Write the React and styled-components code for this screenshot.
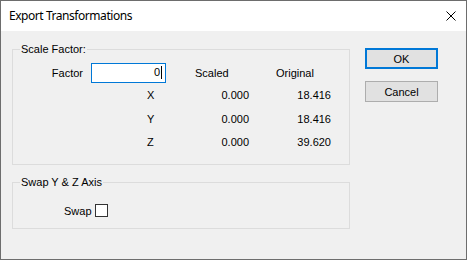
import React from 'react'
import styled, { createGlobalStyle } from 'styled-components'

const Global = createGlobalStyle`
  html, body { margin: 0; padding: 0; background: #ffffff; }
  * { box-sizing: border-box; }
`

const rows = [
  ['X', '0.000', '18.416'],
  ['Y', '0.000', '18.416'],
  ['Z', '0.000', '39.620'],
]

const App = () => {
  return (
    <>
      <Global />
      <Window>
        <TitleBar>
          <Title>Export Transformations</Title>
          <CloseIcon viewBox="0 0 10 10">
            <path d="M0.5 0.5 L9.5 9.5 M9.5 0.5 L0.5 9.5" stroke="#000" strokeWidth="1" />
          </CloseIcon>
        </TitleBar>
        <Body>
          <LeftCol>
            <Group>
              <Legend>Scale Factor:</Legend>
              <ScaleGrid>
                <Label>Factor</Label>
                <FactorInput>
                  <span>0</span>
                  <Caret />
                </FactorInput>
                <Head>Scaled</Head>
                <Head>Original</Head>
                {rows.map(r => (
                  <React.Fragment key={r[0]}>
                    <span />
                    <Axis>{r[0]}</Axis>
                    <Value pad={27}>{r[1]}</Value>
                    <Value pad={0}>{r[2]}</Value>
                  </React.Fragment>
                ))}
              </ScaleGrid>
            </Group>
            <Group second>
              <Legend>Swap Y &amp; Z Axis</Legend>
              <SwapRow>
                <span>Swap</span>
                <Check />
              </SwapRow>
            </Group>
          </LeftCol>
          <Buttons>
            <Button primary>OK</Button>
            <Button>Cancel</Button>
          </Buttons>
        </Body>
      </Window>
    </>
  )
}

export default App

const Window = styled.div`
  width: 467px;
  height: 260px;
  border: 1px solid #6d6d6d;
  display: flex;
  flex-direction: column;
  font-family: "Liberation Sans", Arial, sans-serif;
  font-size: 11px;
  color: #000;
`
const TitleBar = styled.div`
  height: 30px;
  background: #ffffff;
  display: flex;
  align-items: center;
  justify-content: space-between;
  padding: 0 10px 0 8px;
`
const Title = styled.div`
  font-family: "Noto Sans", "Open Sans", sans-serif;
  font-size: 12px;
  letter-spacing: -0.45px;
  color: #000;
  margin-top: -1px;
`
const CloseIcon = styled.svg`
  width: 10px;
  height: 10px;
  margin-top: -1px;
`
const Body = styled.div`
  flex: 1;
  background: #f0f0f0;
  display: flex;
  padding: 12px 0 0 11px;
`
const LeftCol = styled.div`
  width: 338px;
  display: flex;
  flex-direction: column;
`
const Group = styled.fieldset`
  margin: ${p => (p.second ? '11px' : '0')} 0 0 0;
  padding: 0 0 ${p => (p.second ? '11px' : '10px')} 0;
  border: 1px solid #dcdcdc;
  min-width: 0;
`
const Legend = styled.legend`
  margin-left: 7px;
  padding: 0 1px;
  line-height: 13px;
`
const ScaleGrid = styled.div`
  display: grid;
  grid-template-columns: 78px 104px 81px 55px;
  grid-template-rows: 21px 24px 23px 24px;
  margin-top: 6px;
  align-items: center;
`
const Label = styled.span`
  text-align: right;
  padding-right: 8px;
`
const FactorInput = styled.div`
  width: 75px;
  height: 20px;
  border: 1px solid #0078d7;
  background: #fff;
  display: flex;
  align-items: center;
  justify-content: flex-end;
  padding-right: 3px;
  span { line-height: 13px; }
`
const Caret = styled.i`
  display: block;
  width: 1px;
  height: 13px;
  background: #000;
  margin-left: 1px;
`
const Head = styled.span`
  text-align: left;
`
const Axis = styled.span`
  padding-left: 56px;
`
const Value = styled.span`
  text-align: right;
  padding-right: ${p => p.pad}px;
`
const SwapRow = styled.div`
  display: flex;
  align-items: center;
  gap: 3px;
  padding-left: 51px;
  margin-top: 15px;
`
const Check = styled.span`
  display: block;
  width: 13px;
  height: 13px;
  border: 1px solid #333;
  background: #fff;
`
const Buttons = styled.div`
  display: flex;
  flex-direction: column;
  gap: 12px;
  margin-left: 15px;
  padding-top: 5px;
`
const Button = styled.div`
  width: 73px;
  height: 21px;
  background: #e1e1e1;
  border: ${p => (p.primary ? '2px solid #0078d7' : '1px solid #adadad')};
  display: flex;
  align-items: center;
  justify-content: center;
  font-family: "Liberation Sans", Arial, sans-serif;
  font-size: 11px;
`
